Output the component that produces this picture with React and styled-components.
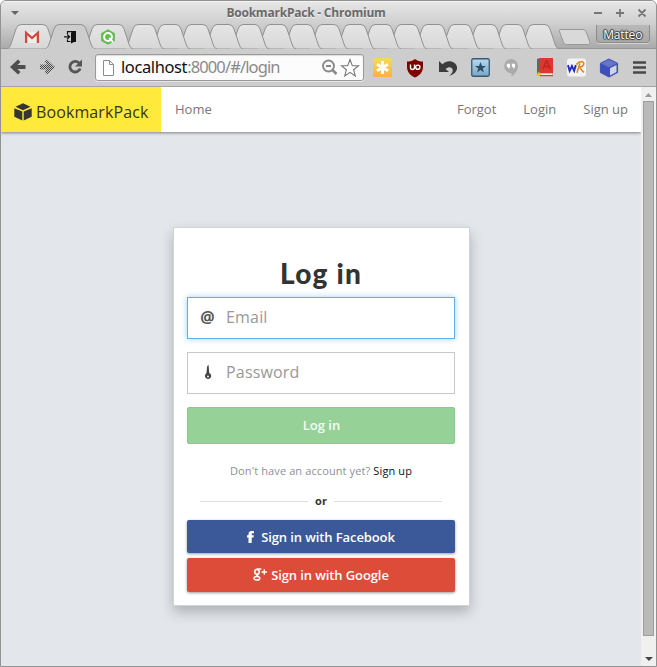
import React from "react";
import styled, { createGlobalStyle, css } from "styled-components";

const Global = createGlobalStyle`
  * { box-sizing: border-box; }
  body { margin: 0; background: #fff; font-family: "Open Sans", "Noto Sans", sans-serif; }
  svg { display: block; flex: none; }
`;

const Window = styled.div`
  width: 657px;
  height: 667px;
  border: 1px solid #929292;
  border-radius: 6px 6px 0 0;
  overflow: hidden;
  display: flex;
  flex-direction: column;
  background: #cdcdcd;
`;
const Frame = styled.div`
  height: 48px;
  flex: none;
  background: linear-gradient(#e6e6e6, #d0d0d0 45%, #aaa);
  border-top: 1px solid #f3f3f3;
  border-bottom: 1px solid #969696;
`;
const TitleBar = styled.div`
  height: 22px;
  display: grid;
  grid-template-columns: 22px 1fr 68px;
  align-items: center;
`;
const MenuArrow = styled.svg`margin-left: 10px;`;
const Title = styled.div`
  text-align: center;
  font: 700 12px/22px "Open Sans", sans-serif;
  letter-spacing: -0.22px;
  color: #696969;
  text-shadow: 0 1px 0 #f2f2f2;
  white-space: nowrap;
  padding: 0 0 0 1px;
`;
const TabStrip = styled.div`
  height: 25px;
  display: flex;
  padding-left: 6px;
  align-items: flex-start;
`;
const Tab = styled.div`
  position: relative;
  flex: none;
  width: ${(p) => p.$w}px;
  height: 25px;
  margin-right: ${(p) => p.$gap}px;
  z-index: ${(p) => p.$z};
  display: grid;
  place-items: center;
  > * { grid-area: 1 / 1; }
`;
const NewTab = styled.svg`margin: 5px 0 0 0;`;
const User = styled.div`
  height: 18px;
  width: 54px;
  margin: 1px 0 0 5px;
  border: 1px solid #8b8b8b;
  border-top: 0;
  border-radius: 0 0 4px 4px;
  background: linear-gradient(#b9b9b9, #a9a9a9);
  color: #fff;
  font: 12px/19px "Open Sans", sans-serif;
  letter-spacing: -0.15px;
  text-align: center;
  text-shadow: 1px 0 1px #333, -1px 0 1px #333, 0 1px 1px #333, 0 -1px 1px #333;
  box-shadow: 0 1px 0 #d4d4d4;
`;
const Toolbar = styled.div`
  height: 38px;
  flex: none;
  display: flex;
  align-items: center;
  padding: 0 9px 0 8px;
  background: #cdcdcd;
  border-bottom: 1px solid #a3a3a3;
`;
const Nav = styled.div`
  display: flex;
  gap: 11px;
  width: 86px;
  margin-top: -2px;
`;
const Omnibox = styled.div`
  display: flex;
  align-items: center;
  width: 269px;
  height: 27px;
  padding: 0 3px 0 6px;
  border: 1px solid #999;
  border-radius: 3px;
  background: #fcfcfc;
  box-shadow: inset 0 1px 1px #ddd, 0 1px 0 #e5e5e5;
`;
const Url = styled.div`
  flex: 1;
  margin: -2px 0 0 6px;
  font: 16.5px/23px "Noto Sans", sans-serif;
  letter-spacing: -0.88px;
  color: #8a8a8a;
  white-space: nowrap;
  b { font-weight: 400; color: #111; letter-spacing: -0.4px; }
`;
const Extensions = styled.div`
  flex: 1;
  display: flex;
  justify-content: space-between;
  align-items: center;
  margin: 0 0 0 9px;
`;
const Viewport = styled.div`
  flex: 1;
  display: flex;
  min-height: 0;
`;
const Page = styled.div`
  flex: 1;
  background: #e3e7ec;
`;
const SiteNav = styled.nav`
  height: 45px;
  display: flex;
  align-items: stretch;
  background: #fff;
  box-shadow: 0 1px 3px rgba(0, 0, 0, 0.45);
  clip-path: inset(0 0 -6px 0);
`;
const Brand = styled.div`
  width: 160px;
  display: flex;
  align-items: center;
  gap: 4px;
  padding: 4px 0 0 13px;
  background: #ffe93a;
  color: #383520;
  font: 16px/24px "Open Sans", sans-serif;
  letter-spacing: 0.1px;
`;
const NavLink = styled.a`
  font-size: 13px;
  line-height: 45px;
  color: #777;
  margin-left: ${(p) => p.$left || 0}px;
`;
const RightLinks = styled.div`
  display: flex;
  margin-left: auto;
  padding-right: 13px;
  gap: 27px;
`;
const Card = styled.main`
  width: 297px;
  height: 379px;
  margin: 95px 0 0 172px;
  background: #fff;
  border: 1px solid #cfd4d6;
  box-shadow: 0 6px 12px rgba(0, 0, 0, 0.24);
  display: flex;
  flex-direction: column;
  padding: 29px 14px 0 13px;
`;
const Heading = styled.h1`
  margin: 0;
  height: 40px;
  font: 900 28px/32px Lato, sans-serif;
  letter-spacing: 1.2px;
  text-align: center;
  color: #333;
`;
const Field = styled.label`
  height: 42px;
  flex: none;
  display: flex;
  align-items: center;
  margin-bottom: 13px;
  border: 1px solid #c8c8c8;
  color: #555;
  ${(p) => p.$focused && css`
    border-color: #62afe8;
    box-shadow: 0 0 6px rgba(98, 175, 232, 0.6);
  `}
`;
const FieldIcon = styled.span`
  width: 38px;
  padding-left: 1px;
  margin-top: -2px;
  display: flex;
  justify-content: center;
  font: 700 16px/20px "Open Sans", sans-serif;
`;
const Input = styled.input`
  flex: 1;
  min-width: 0;
  border: 0;
  outline: 0;
  padding: 0 0 2px;
  background: transparent;
  font: 16px/24px "Open Sans", sans-serif;
  letter-spacing: 0.18px;
  &::placeholder { color: #999; opacity: 1; }
`;
const Button = styled.button`
  height: ${(p) => p.$h}px;
  flex: none;
  display: flex;
  align-items: center;
  justify-content: center;
  padding: 0;
  margin: 0 0 5px;
  border: 0;
  border-radius: 2px;
  color: #fff;
  background: ${(p) => p.$bg};
  font: 600 13px/20px "Open Sans", sans-serif;
  letter-spacing: -0.1px;
  box-shadow: 0 1px 3px rgba(0, 0, 0, 0.4);
  > svg { margin-right: ${(p) => p.$iconGap || 0}px; }
`;
const LoginButton = styled(Button)`
  border: 1px solid #88cb88;
  box-shadow: none;
  margin: 0;
  padding: 0 0 2px 1px;
  color: #f5fcf5;
  letter-spacing: 0;
`;
const Hint = styled.p`
  margin: 17px 0 0;
  font-size: 11px;
  line-height: 20px;
  letter-spacing: 0.11px;
  text-align: center;
  color: #8c9196;
  a { color: #111; }
`;
const Divider = styled.div`
  display: flex;
  align-items: center;
  gap: 7px;
  height: 20px;
  margin: 10px 13px 9px;
  font: 700 11px/20px "Open Sans", sans-serif;
  color: #333;
  &::before, &::after { content: ""; flex: 1; height: 1px; background: #dcdcdc; }
`;
const Scrollbar = styled.div`
  width: 15px;
  flex: none;
  display: flex;
  flex-direction: column;
  align-items: center;
  background: #f0f0f0;
`;
const Thumb = styled.div`
  width: 11px;
  height: 535px;
  background: #bababa;
  border: 1px solid #9d9d9d;
`;

const tabPath = (w) =>
  `M0 24.5 C2 24.5 3 23 4 20 L9 5 Q10.5 .5 14 .5 H${w - 14} Q${w - 10.5} .5 ${w - 9} 5 L${w - 4} 20 C${w - 3} 23 ${w - 2} 24.5 ${w} 24.5`;

function BrowserTab({ w, gap, z, active, children }) {
  return (
    <Tab $w={w} $gap={gap} $z={z}>
      <svg width={w} height="25" viewBox={`0 0 ${w} 25`}>
        <defs>
          <linearGradient id="tab-fill" x2="0" y2="1">
            <stop stopColor="#e5e5e5" />
            <stop offset="1" stopColor="#d8d8d8" />
          </linearGradient>
        </defs>
        <path d={tabPath(w)} fill={active ? "#cdcdcd" : "url(#tab-fill)"} stroke="#929292" />
        {active && <path d={`M1 24.5H${w - 1}`} stroke="#cdcdcd" />}
      </svg>
      {children}
    </Tab>
  );
}

const GmailIcon = () => (
  <svg width="16" height="16" viewBox="0 0 16 16">
    <path d="M1 3h14v11H1z" fill="#eee" />
    <path d="M2.1 14V3.8L8 9l5.9-5.2V14" fill="none" stroke="#d54a3e" strokeWidth="2.3" />
  </svg>
);
const LoginIcon = () => (
  <svg width="16" height="16" viewBox="0 0 16 16">
    <path d="M5.500 5V2.600h6M5.500 10.500v2h3" fill="none" stroke="#111" strokeWidth="1.200" />
    <path d="M9 3.800 11 2h3v11h-2L9 14.500z" fill="#111" />
    <path d="M2 7.800h5.500M5.300 5.500l2.300 2.300L5.300 10" fill="none" stroke="#111" strokeWidth="1.200" />
  </svg>
);
const QIcon = () => (
  <svg width="16" height="16" viewBox="0 0 16 16">
    <path d="m8 .3 6.900 3.900v7.700L8 15.800 1.100 11.900V4.200z" fill="#62bd4e" />
    <circle cx="8" cy="8" r="3.900" fill="none" stroke="#fff" strokeWidth="2" />
    <path d="m9 9 4 4" stroke="#fff" strokeWidth="1.800" />
  </svg>
);
const Arrow = ({ forward }) => (
  <svg width="18" height="18" viewBox="0 0 18 18">
    <defs>
      <pattern id="dots" width="2" height="2" patternUnits="userSpaceOnUse">
        <path d="M0 0h1v1H0zM1 1h1v1H1z" fill="#444" shapeRendering="crispEdges" />
      </pattern>
    </defs>
    <path
      d={forward ? "M2 6.500h7L6.500 4 9 1.500l8 7.500-8 7.500L6.500 14 9 11.500H2z" : "M16.500 7H8.500l3-3L9 1.500 1 9l8 7.500 2.500-2.500-3-3h8z"}
      fill={forward ? "url(#dots)" : "#4f4f4f"}
    />
  </svg>
);
const Reload = () => (
  <svg width="16" height="18" viewBox="0 0 16 18">
    <path d="M12.200 5.200A5.300 5.300 0 1 0 13.200 10.500" fill="none" stroke="#555" strokeWidth="2.800" />
    <path d="M15 1.500V8.500H8z" fill="#555" />
  </svg>
);
const FileIcon = () => (
  <svg width="13" height="16" viewBox="0 0 13 16">
    <path d="M1.500.5h6l4 4v11h-10zM7.500.5v4h4" fill="#fff" stroke="#8c8c8c" />
  </svg>
);
const ZoomOut = () => (
  <svg width="20" height="17" viewBox="-1 0 20 17" fill="none" stroke="#888">
    <circle cx="7.500" cy="7" r="5.500" strokeWidth="1.900" />
    <path d="M5 7h5" strokeWidth="1.800" />
    <path d="m11.500 11 4 4" strokeWidth="2.500" />
  </svg>
);
const StarIcon = () => (
  <svg width="20" height="20" viewBox="0 0 20 20">
    <path d="m10 1.500 2.300 6.100 6.200.2-4.900 3.900 1.700 6.200-5.300-3.500-5.300 3.500 1.700-6.200-4.900-3.900 6.200-.2z" fill="#fff" stroke="#777" strokeWidth="1.100" />
  </svg>
);
const Asterisk = () => (
  <svg width="19" height="19" viewBox="0 0 19 19">
    <defs><linearGradient id="sun" x2="0" y2="1"><stop stopColor="#f1dc5a" /><stop offset="1" stopColor="#fbb044" /></linearGradient></defs>
    <path d="M0 0h19v19H0z" fill="url(#sun)" />
    <path d="M9.500 3v13M4 6.200l11 6.600M15 6.200 4 12.800" stroke="#fff" strokeWidth="3" />
  </svg>
);
const Shield = () => (
  <svg width="18" height="20" viewBox="0 0 18 20">
    <path d="M9 1c2.500 2 5 2.500 8 2.500v5.200c0 5.300-3.500 8.800-8 10.800-4.500-2-8-5.500-8-10.800V3.500C4 3.500 6.500 3 9 1z" fill="#800000" />
    <path d="M4.500 6.500v3a2 2 0 0 0 4 0v-3" fill="none" stroke="#fff" strokeWidth="1.400" />
    <circle cx="11.800" cy="9.200" r="2.100" fill="none" stroke="#fff" strokeWidth="1.400" />
  </svg>
);
const Undo = () => (
  <svg width="20" height="18" viewBox="0 0 20 18">
    <path d="M1 2v11h10L7.500 10c3-2.500 6-2.200 7 .2 1 2.400-1 5-3.500 6.800 5-1.300 8.500-4.500 8-9C18.300 2.500 10-.5 4.300 5.300z" fill="#3c3c3c" />
  </svg>
);
const BlueStar = () => (
  <svg width="19" height="19" viewBox="0 0 19 19">
    <defs><linearGradient id="sky" x2="0" y2="1"><stop stopColor="#b9d8ea" /><stop offset="1" stopColor="#7da6c4" /></linearGradient></defs>
    <rect x=".75" y=".75" width="17.500" height="17.500" rx="1.500" fill="url(#sky)" stroke="#335a78" strokeWidth="1.300" />
    <path d="m9.500 4 1.500 3.900h4l-3.300 2.500 1.300 4.100-3.500-2.500L6 14.500l1.300-4.100L4 7.900h4z" fill="#254f6b" />
  </svg>
);
const Hangouts = () => (
  <svg width="18" height="18" viewBox="1 0 18 18">
    <path d="M8 0a7 7 0 0 1 7 7c0 4.800-3.500 8.500-6.500 10.500v-3.300A7 7 0 1 1 8 0z" fill="#ababab" />
    <path d="M3.800 4.800H7v3.500L5.300 10v-2H3.800zM8.800 4.800H12v3.500L10.300 10v-2H8.800z" fill="#fff" />
  </svg>
);
const Book = () => (
  <svg width="17" height="19" viewBox="0 0 17 19">
    <path d="M4 0h13v15.500H4z" fill="#df362f" />
    <path d="M1 1 4 0v15.500l-3 1z" fill="#656565" />
    <path d="M4 15.500h12v2H4z" fill="#eee" /><path d="M4 17.700h13" stroke="#bd231e" />
    <path d="m7 11 3-8h1l3 8M8.200 8.500h4.600" fill="none" stroke="#c2231d" strokeWidth="1.500" />
    <path d="m3 13.500 1 2 2 .5-2 1-.5 1.500L2 17.500 0 18l1-2z" fill="#f0bc21" />
  </svg>
);
const WordRef = () => (
  <svg width="19" height="19" viewBox="0 0 20 19">
    <rect width="20" height="19" rx="3" fill="#f3f3f3" />
    <path d="m1 7 1.800 6 2.400-5 2.300 5 1.800-6" fill="none" stroke="#252bc2" strokeWidth="2" />
    <path d="m10.500 15 3-10M10 6.500c2-4 8-4 7.700-1-.3 2.700-3 3.500-5 3.500 1.800.5 2.500 4.500 5.300 5.500" fill="none" stroke="#db8b28" strokeWidth="1.700" />
  </svg>
);
const BlueBox = () => (
  <svg width="20" height="20" viewBox="0 0 20 20">
    <path d="m10 1 8.600 4.300v9.200L10 19l-8.600-4.500V5.300z" fill="#3e50b8" stroke="#3e50b8" strokeLinejoin="round" />
    <path d="m10 1.500 8 4-8 3.800-8-3.800z" fill="#6573cb" />
    <path d="m11 10.300 6.500-3.300v7L11 17.500z" fill="#d3d4e0" />
  </svg>
);
const Menu = () => (
  <svg width="14" height="15" viewBox="0 0 14 15"><path d="M0 2.500h13M0 7.500h13M0 12.500h13" stroke="#484848" strokeWidth="2.600" /></svg>
);
const BrandCube = () => (
  <svg width="18" height="18" viewBox="0 0 18 18">
    <path d="m9 .3 7.500 3.500L9 7.200 1.500 3.800zM.3 5.200 8.300 8.500v9L.3 13.700zM17.700 5.200 9.700 8.500v9l8-3.800z" fill="#353535" />
  </svg>
);
const KeyIcon = () => (
  <svg width="8" height="15" viewBox="0 0 8 15">
    <path d="M3.200 1 4.600 0l.6 8A3.100 3.100 0 1 1 2.400 8.300z" fill="#444" /><circle cx="4" cy="11.500" r="1" fill="#eee" />
  </svg>
);
const Facebook = () => (
  <svg width="7" height="12" viewBox="0 0 7 12"><path d="M6.900 0v2.200H5.400c-.6 0-.7.300-.7.900v1.200h2.100l-.3 2.200H4.700V12H1.500V6.500H0V4.300h1.500V2.900C1.500 1 2.800 0 4.600 0z" fill="#fff" /></svg>
);
const GooglePlus = () => (
  <svg width="15" height="14" viewBox="0 0 15 14" fill="none" stroke="#fff">
    <ellipse cx="4" cy="3.800" rx="2.300" ry="2.500" strokeWidth="1.700" />
    <path d="M4 1h4.300M5.300 6.200c-2.500 1-1.500 1.700 0 2.300" strokeWidth="1.500" />
    <ellipse cx="3.900" cy="10.300" rx="2.900" ry="1.800" strokeWidth="1.500" />
    <path d="M8.500 4h5.500M11.250 1.300v5.500" strokeWidth="1.300" />
  </svg>
);

const favicons = [GmailIcon, LoginIcon, QIcon];

export default function App() {
  return (
    <>
      <Global />
      <Window>
        <Frame>
          <TitleBar>
            <MenuArrow width="8" height="4" viewBox="0 0 8 4"><path d="M0 0h8L4 4z" fill="#666" /></MenuArrow>
            <Title>BookmarkPack - Chromium</Title>
            <svg width="60" height="10" viewBox="0 0 60 10">
              <path d="M6 5h8M28 5h8M32 1v8M50.500 1.500l7 7M57.500 1.500l-7 7" stroke="#777" strokeWidth="1.800" />
            </svg>
          </TitleBar>
          <TabStrip>
            {favicons.map((Icon, i) => (
              <BrowserTab key={i} w={50} gap={i === 2 ? -9 : -12} z={i === 1 ? 40 : 30 - i} active={i === 1}><Icon /></BrowserTab>
            ))}
            {Array.from({ length: 16 }, (_, i) => (
              <BrowserTab key={i} w={40} gap={i === 15 ? -1 : -13.7} z={20 - i} />
            ))}
            <NewTab width="33" height="16" viewBox="0 0 33 16">
              <path d="M3 .5h22q2 0 3 2l4 11q.5 2-1.500 2h-22q-2 0-3-2l-4-11q-.5-2 1.500-2z" fill="#d9d9d9" stroke="#979797" />
            </NewTab>
            <User>Matteo</User>
          </TabStrip>
        </Frame>
        <Toolbar>
          <Nav><Arrow /><Arrow forward /><Reload /></Nav>
          <Omnibox>
            <FileIcon />
            <Url><b>localhost</b>:8000/#/login</Url>
            <ZoomOut />
            <StarIcon />
          </Omnibox>
          <Extensions>
            <Asterisk /><Shield /><Undo /><BlueStar /><Hangouts /><Book /><WordRef /><BlueBox /><Menu />
          </Extensions>
        </Toolbar>
        <Viewport>
          <Page>
            <SiteNav>
              <Brand><BrandCube />BookmarkPack</Brand>
              <NavLink $left={14}>Home</NavLink>
              <RightLinks>
                <NavLink>Forgot</NavLink><NavLink>Login</NavLink><NavLink>Sign up</NavLink>
              </RightLinks>
            </SiteNav>
            <Card>
              <Heading>Log in</Heading>
              <Field $focused><FieldIcon>@</FieldIcon><Input placeholder="Email" /></Field>
              <Field><FieldIcon><KeyIcon /></FieldIcon><Input type="password" placeholder="Password" /></Field>
              <LoginButton $h={37} $bg="#96d297">Log in</LoginButton>
              <Hint>Don't have an account yet? <a>Sign up</a></Hint>
              <Divider>or</Divider>
              <Button $h={33} $bg="#3b5998" $iconGap={7}><Facebook />Sign in with Facebook</Button>
              <Button $h={34} $bg="#dd4b39" $iconGap={3}><GooglePlus />Sign in with Google</Button>
            </Card>
          </Page>
          <Scrollbar>
            <svg width="15" height="14" viewBox="0 0 15 14"><path d="M4 10h7L7.500 6z" fill="#999" /></svg>
            <Thumb />
            <svg width="15" height="30" viewBox="0 0 15 30"><path d="M4 21h8l-4 4z" fill="#444" /></svg>
          </Scrollbar>
        </Viewport>
      </Window>
    </>
  );
}
